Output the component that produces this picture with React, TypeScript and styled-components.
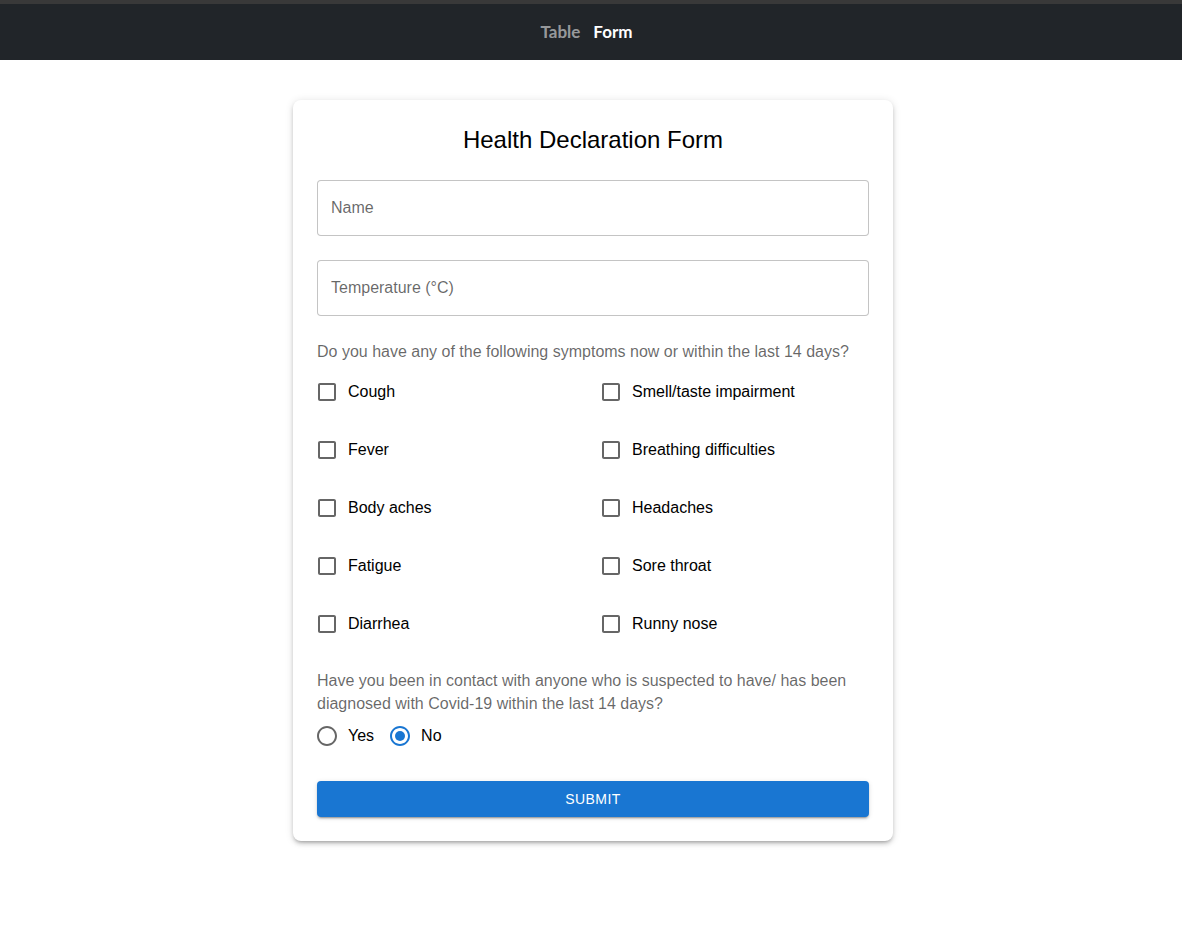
import { useState } from "react";
import styled, { createGlobalStyle } from "styled-components";

const GlobalStyle = createGlobalStyle`
    body {
        margin: 0;
        background: #ffffff;
        font-family: "Liberation Sans", Arial, sans-serif;
    }
    * {
        box-sizing: border-box;
    }
`;

const NavBar = styled.nav`
    height: 60px;
    border-top: 4px solid #393939;
    background-color: #212529;
    display: flex;
    justify-content: center;
    align-items: center;
    gap: 13px;
    padding: 0 9px 2px 0;
`;

const NavLink = styled.a<{ $active?: boolean }>`
    font-family: Lato, "Open Sans", sans-serif;
    font-weight: 700;
    font-size: 17px;
    color: ${(props) => (props.$active ? "#ffffff" : "rgba(255, 255, 255, 0.55)")};
    text-decoration: none;
    cursor: pointer;
`;

const Page = styled.main`
    padding: 40px 0 40px 4px;
`;

const Card = styled.form`
    width: 600px;
    margin: 0 auto;
    padding: 24px;
    background: #ffffff;
    border-radius: 8px;
    box-shadow: 0px 3px 3px -2px rgba(0, 0, 0, 0.2), 0px 3px 4px 0px rgba(0, 0, 0, 0.14),
        0px 1px 8px 0px rgba(0, 0, 0, 0.12);
    display: flex;
    flex-direction: column;
`;

const Title = styled.h1`
    margin: 0 0 24px;
    font-size: 24px;
    font-weight: 400;
    line-height: 32px;
    text-align: center;
    color: #000000;
`;

const TextInput = styled.input`
    height: 56px;
    width: 100%;
    padding: 0 13px;
    margin-bottom: 24px;
    border: 1px solid rgba(0, 0, 0, 0.23);
    border-radius: 4px;
    font-family: inherit;
    font-size: 16px;
    color: #000000;
    outline: none;
    &::placeholder {
        color: rgba(0, 0, 0, 0.6);
    }
    &:hover {
        border-color: rgba(0, 0, 0, 0.87);
    }
    &:focus {
        border: 2px solid #1976d2;
        padding: 0 12px;
    }
`;

const Question = styled.p`
    margin: 0;
    font-size: 16px;
    line-height: 23px;
    color: rgba(0, 0, 0, 0.6);
`;

const SymptomGrid = styled.div`
    display: grid;
    grid-template-columns: 284px 1fr;
    row-gap: 16px;
    margin: 8px 0 24px;
`;

const Option = styled.label`
    display: flex;
    align-items: center;
    height: 42px;
    margin-left: -11px;
    margin-right: 16px;
    cursor: pointer;
    font-size: 16px;
    color: #000000;
    input {
        position: absolute;
        opacity: 0;
        width: 0;
        height: 0;
    }
`;

const IconBox = styled.span<{ $checked?: boolean }>`
    width: 42px;
    height: 42px;
    padding: 9px;
    display: flex;
    color: ${(props) => (props.$checked ? "#1976d2" : "rgba(0, 0, 0, 0.6)")};
    svg {
        width: 24px;
        height: 24px;
        fill: currentColor;
    }
`;

const RadioRow = styled.div`
    display: flex;
    margin: 0 0 24px;
`;

const SubmitButton = styled.button`
    height: 36px;
    width: 100%;
    border: none;
    border-radius: 4px;
    background-color: #1976d2;
    color: #ffffff;
    font-family: inherit;
    font-size: 14px;
    font-weight: 500;
    letter-spacing: 0.4px;
    text-transform: uppercase;
    cursor: pointer;
    box-shadow: 0px 3px 1px -2px rgba(0, 0, 0, 0.2), 0px 2px 2px 0px rgba(0, 0, 0, 0.14),
        0px 1px 5px 0px rgba(0, 0, 0, 0.12);
    &:hover {
        background-color: #1565c0;
    }
`;

const symptoms = [
    "Cough",
    "Smell/taste impairment",
    "Fever",
    "Breathing difficulties",
    "Body aches",
    "Headaches",
    "Fatigue",
    "Sore throat",
    "Diarrhea",
    "Runny nose",
];

function CheckIcon({ checked }: { checked: boolean }) {
    return (
        <IconBox $checked={checked}>
            {checked ? (
                <svg viewBox="0 0 24 24">
                    <path d="M19 3H5c-1.11 0-2 .9-2 2v14c0 1.1.89 2 2 2h14c1.11 0 2-.9 2-2V5c0-1.1-.89-2-2-2zm-9 14l-5-5 1.41-1.41L10 14.17l7.59-7.59L19 8l-9 9z" />
                </svg>
            ) : (
                <svg viewBox="0 0 24 24">
                    <path d="M19 5v14H5V5h14m0-2H5c-1.11 0-2 .9-2 2v14c0 1.1.89 2 2 2h14c1.11 0 2-.9 2-2V5c0-1.1-.89-2-2-2z" />
                </svg>
            )}
        </IconBox>
    );
}

function RadioIcon({ checked }: { checked: boolean }) {
    return (
        <IconBox $checked={checked}>
            <svg viewBox="0 0 24 24">
                <path d="M12 2C6.48 2 2 6.48 2 12s4.48 10 10 10 10-4.48 10-10S17.52 2 12 2zm0 18c-4.42 0-8-3.58-8-8s3.58-8 8-8 8 3.58 8 8-3.58 8-8 8z" />
                {checked && <circle cx="12" cy="12" r="5" />}
            </svg>
        </IconBox>
    );
}

function App() {
    const [checked, setChecked] = useState<string[]>([]);
    const [contact, setContact] = useState("no");

    const toggle = (name: string) =>
        setChecked((prev) => (prev.includes(name) ? prev.filter((s) => s !== name) : [...prev, name]));

    return (
        <>
            <GlobalStyle />
            <NavBar>
                <NavLink>Table</NavLink>
                <NavLink $active>Form</NavLink>
            </NavBar>
            <Page>
                <Card onSubmit={(e) => e.preventDefault()}>
                    <Title>Health Declaration Form</Title>
                    <TextInput placeholder="Name" />
                    <TextInput placeholder="Temperature (°C)" />
                    <Question>Do you have any of the following symptoms now or within the last 14 days?</Question>
                    <SymptomGrid>
                        {symptoms.map((s) => (
                            <Option key={s}>
                                <input type="checkbox" checked={checked.includes(s)} onChange={() => toggle(s)} />
                                <CheckIcon checked={checked.includes(s)} />
                                {s}
                            </Option>
                        ))}
                    </SymptomGrid>
                    <Question>
                        Have you been in contact with anyone who is suspected to have/ has been diagnosed with
                        Covid-19 within the last 14 days?
                    </Question>
                    <RadioRow>
                        {["Yes", "No"].map((v) => (
                            <Option key={v}>
                                <input
                                    type="radio"
                                    name="contact"
                                    checked={contact === v.toLowerCase()}
                                    onChange={() => setContact(v.toLowerCase())}
                                />
                                <RadioIcon checked={contact === v.toLowerCase()} />
                                {v}
                            </Option>
                        ))}
                    </RadioRow>
                    <SubmitButton type="submit">Submit</SubmitButton>
                </Card>
            </Page>
        </>
    );
}

export default App;
